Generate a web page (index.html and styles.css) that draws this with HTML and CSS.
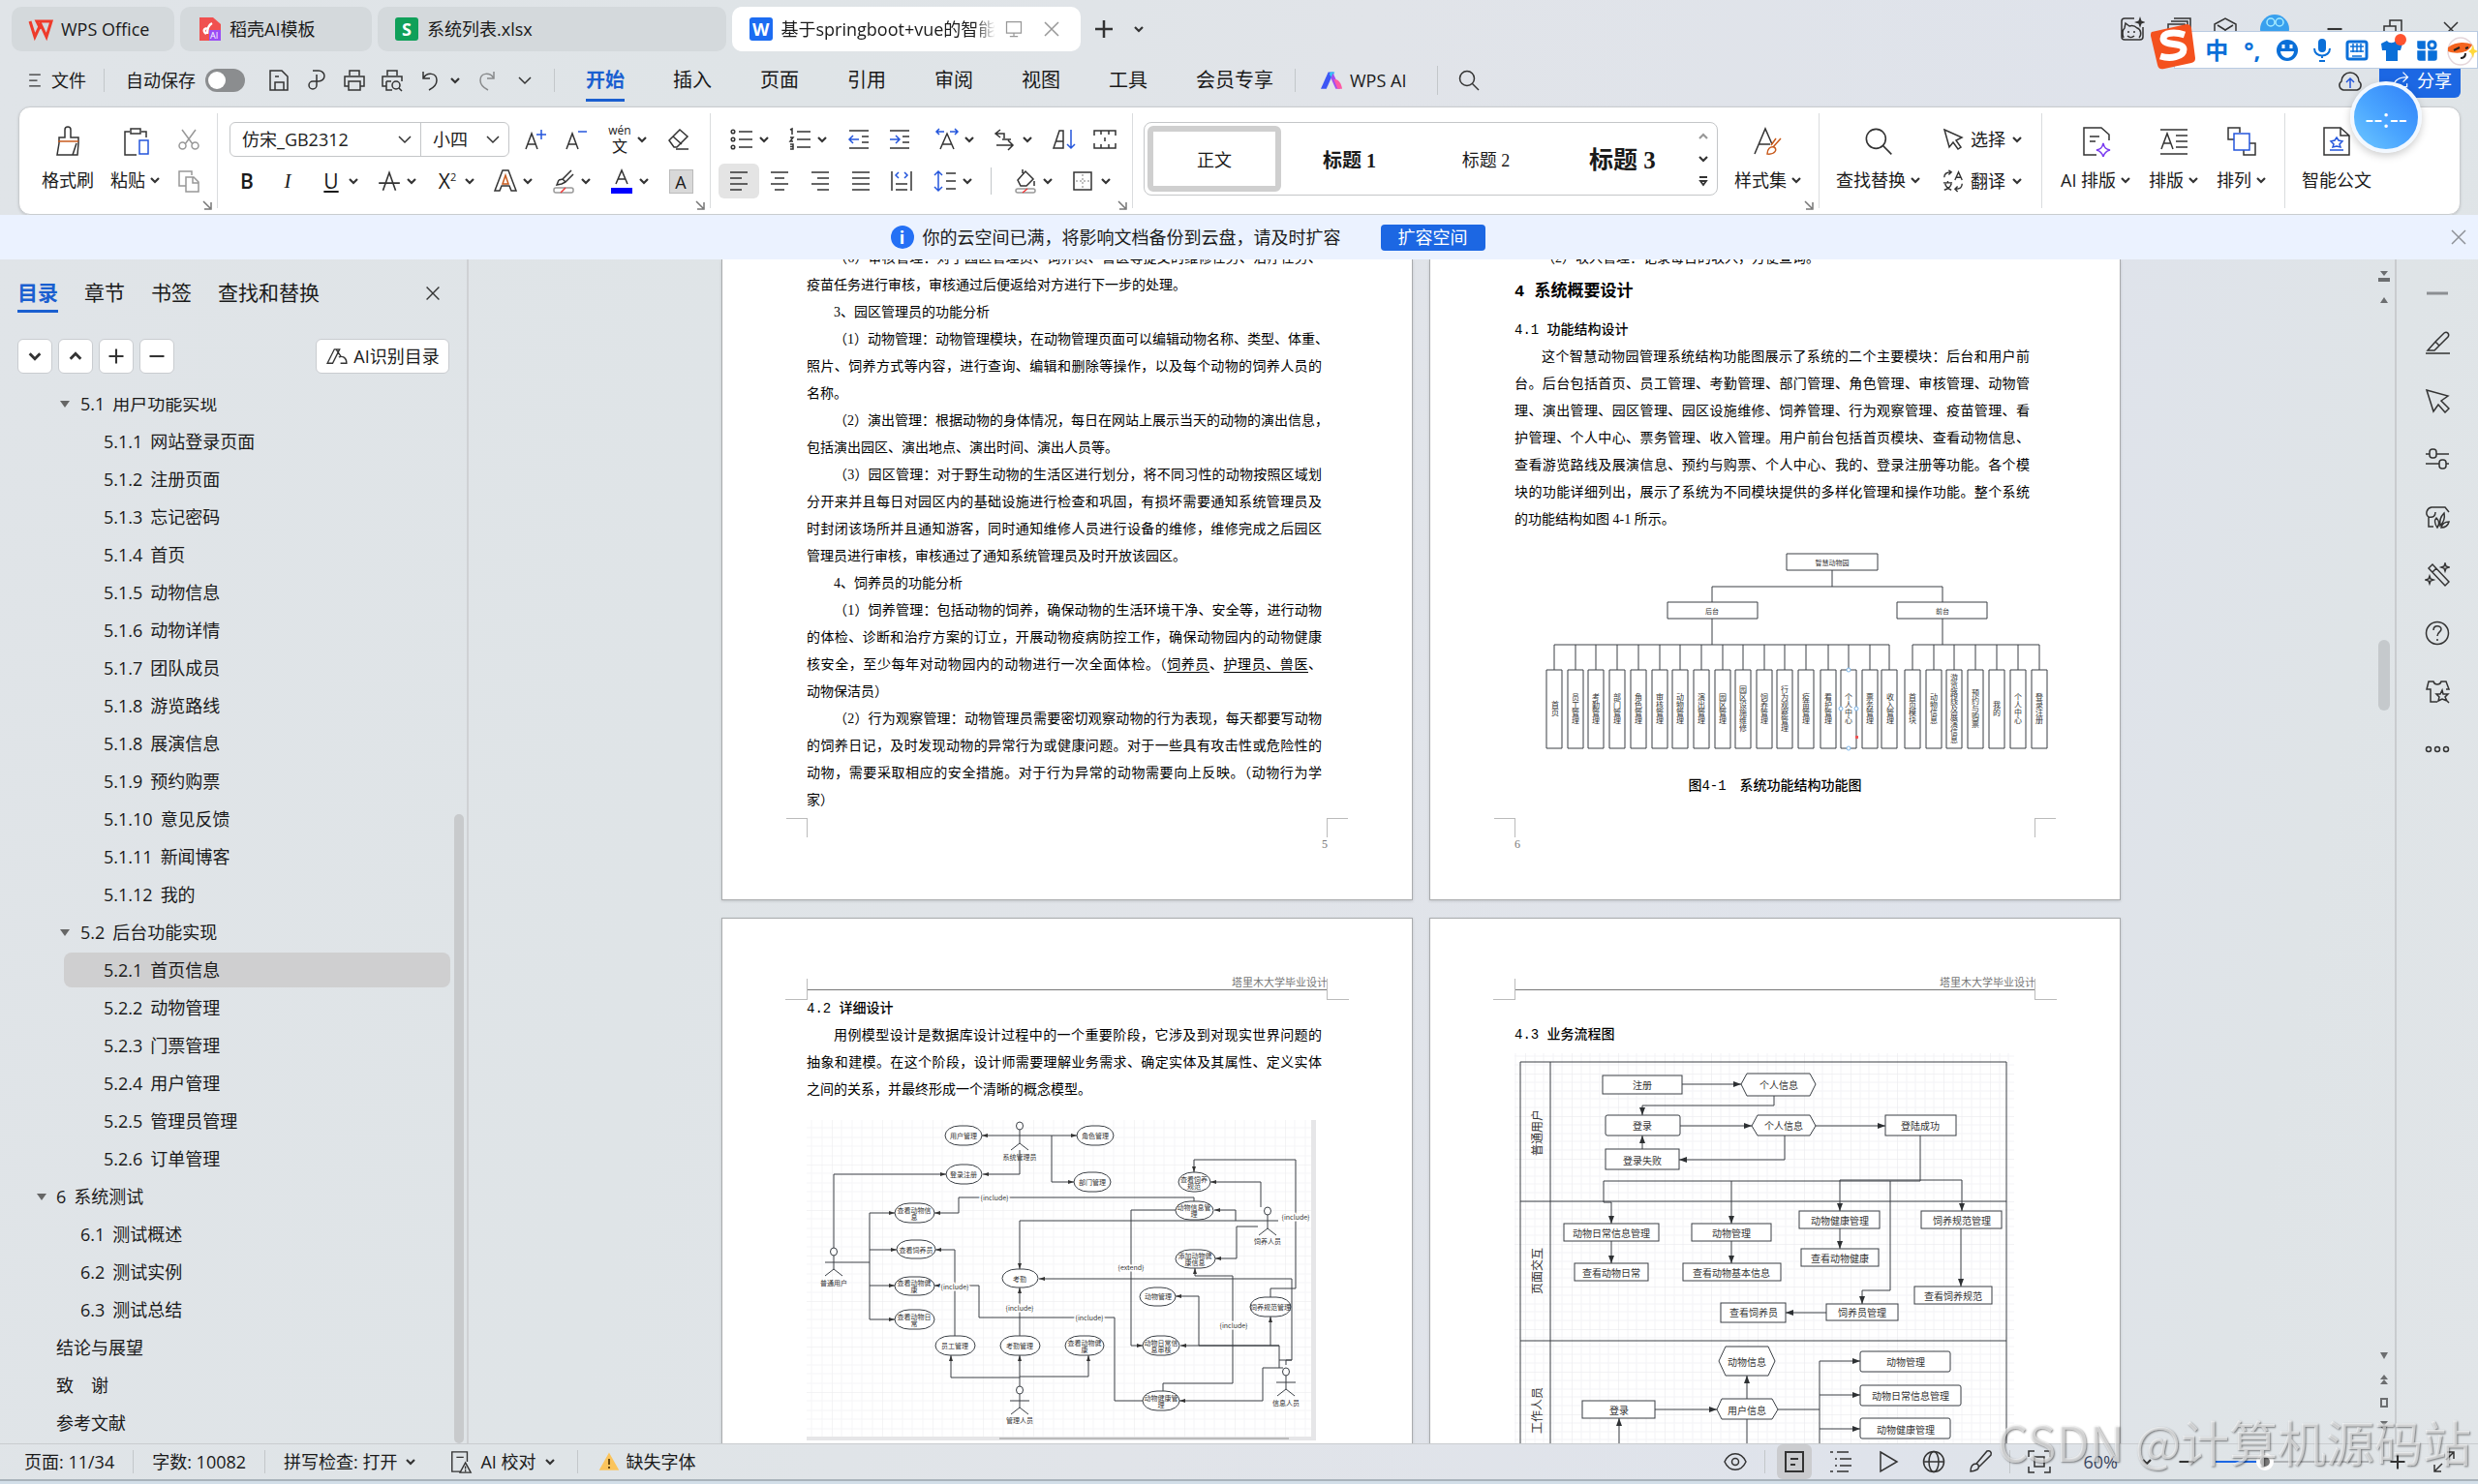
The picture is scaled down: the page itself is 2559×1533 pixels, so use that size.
FILE: index.html
```html
<!DOCTYPE html>
<html lang="zh-CN">
<head>
<meta charset="utf-8">
<title>WPS Office</title>
<link rel="stylesheet" href="styles.css">
</head>
<body>
<svg class="sprite" aria-hidden="true">
  <symbol id="caret" viewBox="0 0 12 12"><path d="M2 4l4 4 4-4" stroke-width="2.2"/></symbol>
  <symbol id="chev" viewBox="0 0 16 16"><path d="M2 5l6 6 6-6"/></symbol>
  <symbol id="x" viewBox="0 0 24 24"><path d="M5 5l14 14M19 5L5 19"/></symbol>
  <symbol id="search" viewBox="0 0 24 24"><circle cx="10" cy="10" r="7.5"/><path d="M15.500 15.500L22 22"/></symbol>
  <symbol id="launch" viewBox="0 0 12 12"><path d="M2 2l7 7M10 3v7H3"/></symbol>
  <symbol id="ham" viewBox="0 0 24 24"><path d="M5 5h14M5 12h10M5 19h14"/></symbol>
  <symbol id="save" viewBox="0 0 24 24"><path d="M3 2h12l6 6v14H3zM8 22v-8h9v8M8 8h4"/></symbol>
  <symbol id="export" viewBox="0 0 24 24"><path d="M8 2h6a6 5.500 0 0 1 0 11H8a4 4 0 1 0 4 4V6"/></symbol>
  <symbol id="print" viewBox="0 0 24 24"><path d="M7 7V2h10v5M6 18H2V8h20v10h-4M6 13h12v9H6z"/></symbol>
  <symbol id="preview" viewBox="0 0 24 24"><path d="M7 7V2h10v5M6 18H2V8h20v5M6 13h5M6 13v9h6"/><circle cx="16" cy="17" r="4"/><path d="M19 20l3 3"/></symbol>
  <symbol id="undo" viewBox="0 0 24 24"><path d="M5 3v7h7M5 10c4-7 14-6 14 2 0 5-4 8-8 10"/></symbol>
  <symbol id="redo" viewBox="0 0 24 24"><path d="M19 3v7h-7M19 10C15 3 5 4 5 12c0 5 4 8 8 10"/></symbol>
  <symbol id="brush" viewBox="0 0 32 32"><path d="M13 12V4a3 3 0 0 1 6 0v8h8v6l-1 12H5l2-12v-6zM25 18l-4 12"/><path class="or" d="M6 16h21"/></symbol>
  <symbol id="paste" viewBox="0 0 32 32"><path d="M10 6H5v24h12M22 6h5v6M11 3h10v5H11z"/><path class="bl" d="M20 15h9v14h-9z"/></symbol>
  <symbol id="cut" viewBox="0 0 24 24"><path d="M5 2l11 15M19 2L8 17"/><circle cx="5.500" cy="18.500" r="3.500"/><circle cx="18.500" cy="18.500" r="3.500"/></symbol>
  <symbol id="copy" viewBox="0 0 24 24"><path d="M9 17H2V2h13v4M9 8h8l5 5v10H9zM16 8v6h6"/></symbol>
  <symbol id="aup" viewBox="0 0 26 24"><path d="M3 22l6-16 6 16M5 17h8"/><path class="bl" d="M19 2v10M14 7h10"/></symbol>
  <symbol id="adn" viewBox="0 0 26 24"><path d="M3 22l6-16 6 16M5 17h8"/><path class="bl" d="M15 4h9"/></symbol>
  <symbol id="eraser" viewBox="0 0 24 24"><path d="M2 13L13 2l8 7-11 11H7zM6 9l9 8M9 22h13"/></symbol>
  <symbol id="strike" viewBox="0 0 24 24"><path d="M6 21l6-17 6 17M2 14h20"/></symbol>
  <symbol id="hl" viewBox="0 0 26 26"><path d="M8 12l4-1 9-9M12 11l3 3 8-8M8 12l-2 5 5-1 4-2"/><rect x="3" y="20" width="20" height="5" rx="2" stroke="#999"/><path d="M10 25l5-5" stroke="#e33"/></symbol>
  <symbol id="fontcol" viewBox="0 0 26 26"><path d="M7 16L13 2l6 14M9 11h8"/><path d="M2 23h22" stroke="#00f" stroke-width="6"/></symbol>
  <symbol id="outl" viewBox="0 0 26 26"><path d="M2 23L10 2h6l8 21h-5l-2-5H9l-2 5z"/><path class="or" d="M10 16l3-9 3 9z"/></symbol>
  <symbol id="bul" viewBox="0 0 26 24"><path d="M10 4h14M10 12h14M10 20h14"/><circle cx="4" cy="4" r="1.800"/><circle cx="4" cy="12" r="1.800"/><circle cx="4" cy="20" r="1.800"/></symbol>
  <symbol id="num" viewBox="0 0 26 24"><path d="M10 4h14M10 12h14M10 20h14M3 2l2-1v6M3 10h3l-3 4h3M3 17h3v5H3M3 19.500h3"/></symbol>
  <symbol id="outd" viewBox="0 0 24 24"><path d="M2 3h20M2 21h20M15 9h7M15 15h7"/><path class="bl" d="M12 12H3M6 8l-4 4 4 4"/></symbol>
  <symbol id="ind" viewBox="0 0 24 24"><path d="M2 3h20M2 21h20M15 9h7M15 15h7"/><path class="bl" d="M2 12h9M8 8l4 4-4 4"/></symbol>
  <symbol id="scale" viewBox="0 0 26 24"><path d="M6 22l7-16 7 16M8 17h10"/><path class="bl" d="M2 4h8M16 4h8M5 1L2 4l3 3M21 1l3 3-3 3"/></symbol>
  <symbol id="dir" viewBox="0 0 24 24"><path d="M8 2L3 6l5 4M3 6h9v5M10 12h9M4 18h17M16 13l5 5-5 5"/></symbol>
  <symbol id="sort" viewBox="0 0 26 24"><path d="M2 21L8 3h4v18zM5 14h7"/><path class="bl" d="M20 2v19M16 17l4 4 4-4"/></symbol>
  <symbol id="tabs" viewBox="0 0 26 24"><path d="M2 8V3h22v5M9 3v4M17 3v4M2 16v5h22v-5M9 21v-4M17 21v-4M13 10v4"/></symbol>
  <symbol id="al" viewBox="0 0 24 24"><path d="M3 3h18M3 9h12M3 15h18M3 21h12"/></symbol>
  <symbol id="ac" viewBox="0 0 24 24"><path d="M3 3h18M7 9h10M3 15h18M7 21h10"/></symbol>
  <symbol id="ar" viewBox="0 0 24 24"><path d="M3 3h18M9 9h12M3 15h18M9 21h12"/></symbol>
  <symbol id="aj" viewBox="0 0 24 24"><path d="M3 3h18M3 9h18M3 15h18M3 21h18"/></symbol>
  <symbol id="ad" viewBox="0 0 24 24"><path d="M2 2v20M22 2v20M6 15h12M6 21h12"/><path class="bl" d="M9 3L6 6l3 3M15 3l3 3-3 3"/></symbol>
  <symbol id="lh" viewBox="0 0 26 24"><path d="M14 4h10M14 12h10M14 20h10"/><path class="bl" d="M6 2v20M2 6l4-4 4 4M2 18l4 4 4-4"/></symbol>
  <symbol id="fill" viewBox="0 0 26 26"><path d="M5 12l8-9 8 8-7 7H8zM10 5V1M22 13v5"/><rect x="3" y="21" width="20" height="4" rx="2" stroke="#999"/><path d="M10 25l5-4" stroke="#e33"/></symbol>
  <symbol id="border" viewBox="0 0 24 24"><path d="M3 3h18v18H3z"/><path d="M12 5v14M5 12h14" stroke="#aaa" stroke-dasharray="2 2"/></symbol>
  <symbol id="styles" viewBox="0 0 32 32"><path d="M2 29L13 3l7 16M6 19h12"/><path class="or" d="M29 13l-8 9M24 13l-5 7M15 29c0-5 3-8 7-7 4 2 1 8-7 7z"/></symbol>
  <symbol id="pick" viewBox="0 0 24 24"><path d="M3 2l18 8-6 3 5 7-3 2-5-7-4 5z"/></symbol>
  <symbol id="trans" viewBox="0 0 26 26"><path d="M3 9c0-4 3-6 8-6M8 1l3 2-3 3M15 12l4-9 4 9M17 9h5M2 15h10M7 13v2M4 16c1 4 4 6 7 7M11 16c-1 4-4 6-8 7M23 16c0 4-3 6-7 6M18 19l-3 3 3 3"/></symbol>
  <symbol id="aidoc" viewBox="0 0 32 32"><path d="M16 30H3V2h18l8 7v6M9 11h10M9 16h6"/><path stroke="#7a3cf0" d="M23 18c1 5 3 6 7 7-4 1-6 3-7 7-1-4-3-6-7-7 4-1 6-2 7-7z"/></symbol>
  <symbol id="typeset" viewBox="0 0 32 32"><path d="M2 4h28M2 29h28M3 24L9 8l6 16M5 18h8M18 10h12M18 16h12M18 22h12"/></symbol>
  <symbol id="arrange" viewBox="0 0 32 32"><path d="M8 14H2V2h12v5M24 18h6v12H18v-5"/><path class="bl" d="M8 8h16v17H8z"/></symbol>
  <symbol id="gov" viewBox="0 0 32 32"><path d="M3 2h17l9 8v20H3zM20 2v8h9"/><path class="bl" d="M16 12l2 3 4 1-3 3 1 3-4-1-4 1 1-3-3-3 4-1zM9 25h14"/></symbol>
  <symbol id="plus" viewBox="0 0 24 24"><path d="M12 3v18M3 12h18" stroke-width="2.500"/></symbol>
  <symbol id="minus" viewBox="0 0 24 24"><path d="M3 12h18" stroke-width="2.500"/></symbol>
  <symbol id="monitor" viewBox="0 0 24 24"><path d="M3 3h18v14H3zM12 17v4M7 21h10"/></symbol>
  <symbol id="bear" viewBox="0 0 26 26"><path d="M15 2H5a3 3 0 0 0-3 3v16a3 3 0 0 0 3 3h16a3 3 0 0 0 3-3V11M4 22c-2-5-1-8 1-10l1-5 4 3c3-1 6 0 8 2 4 1 5 7 2 10M9 15v2M15 15v2M8 20c2 2 5 2 7 0"/><path fill="#333" stroke="none" d="M21 0l1.500 4.500L27 6l-4.500 1.500L21 12l-1.500-4.500L15 6l4.500-1.500z"/></symbol>
  <symbol id="stack" viewBox="0 0 26 26"><path d="M2 8h17v17H2zM5 5h17v17M8 2h17v17M6 13h9"/></symbol>
  <symbol id="cube" viewBox="0 0 26 26"><path d="M2 8l11-6 11 6v12l-11 5L2 20zM5 9l8 5 8-5M13 14v9"/></symbol>
  <symbol id="restore" viewBox="0 0 24 24"><path d="M3 9h12v12H3zM9 9V3h12v12h-6"/></symbol>
  <symbol id="cloud" viewBox="0 0 26 26"><path d="M6 23a5 5 0 0 1-2-9 9 9 0 0 1 18 0 5 5 0 0 1-2 9z"/><path class="bl" d="M13 21v-9M9 15l4-4 4 4"/></symbol>
  <symbol id="share" viewBox="0 0 24 24"><path d="M15 2l6 6-6 6M21 8C10 8 4 12 3 20h17v-4"/></symbol>
  <symbol id="ai" viewBox="0 0 26 20"><path d="M2 18L10 2h6L8 18zM12 2l6 9M17 18h7c0-6-4-9-9-7"/></symbol>
  <symbol id="pen" viewBox="0 0 26 26"><path d="M1 24h25M3 21l8-9L20 3c3-2 6 1 4 4l-9 9-5 5zM11 12l4 4"/></symbol>
  <symbol id="arrow" viewBox="0 0 26 26"><path d="M2 2l22 6-7 5 8 8-4 4-7-8-5 7z"/></symbol>
  <symbol id="sliders" viewBox="0 0 26 26"><path d="M1 8h4M12 8h13M1 18h14M22 18h3"/><rect x="5" y="3" width="7" height="9" rx="3"/><rect x="15" y="14" width="7" height="9" rx="3"/></symbol>
  <symbol id="leaf" viewBox="0 0 26 26"><path d="M9 23H4V13C0 10 2 4 7 3h14l4 5M4 13c5 1 7-1 7-5M13 24c-3-4-3-8-1-10 3 3 3 7 1 10zM16 22c-1-5 1-10 4-13 1 5 0 9-4 13zM17 24c1-4 4-6 8-6-1 4-4 6-8 6z"/></symbol>
  <symbol id="wand" viewBox="0 0 26 26"><path d="M4 6l4-4 17 18-4 4zM8 10l4-4M21 1l1 3 3 1-3 1-1 3-1-3-3-1 3-1zM5 14l1 3 3 1-3 1-1 3-1-3-3-1 3-1z"/></symbol>
  <symbol id="help" viewBox="0 0 26 26"><circle cx="13" cy="13" r="11.500"/><path d="M9 10c0-6 8-5 8-1 0 3-4 3-4 7M13 19v2"/></symbol>
  <symbol id="shirt" viewBox="0 0 26 26"><path d="M13 24H6V11H2l2-8h5c1 4 7 4 8 0h5l3 8h-3"/><path d="M18 12l1 4h5l-3 3 2 4-5-2-4 2 1-4-3-3h4zM21 21l4 4"/></symbol>
  <symbol id="dots" viewBox="0 0 26 26"><circle cx="4" cy="13" r="2.500"/><circle cx="13" cy="13" r="2.500"/><circle cx="22" cy="13" r="2.500"/></symbol>
  <symbol id="proof" viewBox="0 0 24 26"><path d="M11 24H2V2h17v11M7 8h8M17 14l6 11H11zM17 18v3M17 22v2"/></symbol>
  <symbol id="eye" viewBox="0 0 26 26"><path d="M2 13c5-11 17-11 22 0-5 11-17 11-22 0z"/><circle cx="13" cy="13" r="3.500"/></symbol>
  <symbol id="page" viewBox="0 0 26 26"><path d="M4 3h18v20H4zM9 10h8M9 16h5" stroke-width="2"/></symbol>
  <symbol id="list" viewBox="0 0 26 26"><path d="M2 3h3M9 3h12M7 10h2M12 10h12M7 17h2M12 17h12M2 23h3M9 23h12"/></symbol>
  <symbol id="play" viewBox="0 0 26 26"><path d="M6 3l17 10L6 23z"/></symbol>
  <symbol id="globe" viewBox="0 0 26 26"><circle cx="13" cy="13" r="10.500"/><ellipse cx="13" cy="13" rx="5" ry="10.500"/><path d="M3 13h20"/></symbol>
  <symbol id="quill" viewBox="0 0 26 26"><path d="M3 23c0-5 2-8 6-8 3 1 3 4 1 6-2 1-4 2-7 2zM9 15L20 2c3-1 5 1 4 4L12 18"/></symbol>
  <symbol id="focus" viewBox="0 0 26 26"><path d="M2 8V2h6M18 2h6v6M24 18v6h-6M8 24H2v-6M8 8h10v10H8z"/></symbol>
  <symbol id="full" viewBox="0 0 26 26"><path d="M16 3h7v7M23 3l-8 8M3 16v7h7M3 23l8-8"/></symbol>
  <marker id="m" viewBox="0 0 8 6" refX="8" refY="3" markerWidth="8" markerHeight="6" markerUnits="userSpaceOnUse" orient="auto-start-reverse"><path d="M0 0l8 3-8 3z" fill="#2d3033" stroke="none"/></marker>
  <marker id="s" viewBox="0 0 6 4" refX="6" refY="2" markerWidth="6" markerHeight="4" markerUnits="userSpaceOnUse" orient="auto-start-reverse"><path d="M0 0l6 2-6 2z" fill="#333" stroke="none"/></marker>
</svg>

<header class="titlebar">
  <button class="tab tab-home"><svg class="i24" viewBox="0 0 24 24"><path d="M1 4l5 16L12 7l6 13L23 4H8l4 8" stroke="#ee3b2b" stroke-width="3"/></svg>WPS Office</button>
  <button class="tab tab-tpl"><svg class="i24" viewBox="0 0 24 24"><path d="M2 0h14l8 7v17H2z" fill="#f0504f" stroke="none"/><path d="M9 17C5 14 7 10 11 12M10 17c0-6 1-9 5-11" stroke="#fff" stroke-width="2.500"/><rect x="12" y="13" width="12" height="11" fill="#9a4df5" stroke="none"/><text x="13" y="22" font-size="9" fill="#fff" stroke="none">AI</text></svg>稻壳AI模板</button>
  <button class="tab tab-doc"><span class="app green">S</span>系统列表.xlsx</button>
  <button class="tab tab-doc active"><span class="app blue">W</span><span class="fade">基于springboot+vue的智能</span><svg class="i20 dim"><use href="#monitor"/></svg><svg class="i24 dim"><use href="#x"/></svg></button>
  <button class="flat" aria-label="新建"><svg class="i24"><use href="#plus"/></svg></button>
  <button class="flat" aria-label="标签列表"><svg class="i12"><use href="#caret"/></svg></button>
  <div class="winctl">
    <svg class="i26"><use href="#bear"/></svg><svg class="i26"><use href="#stack"/></svg><svg class="i26"><use href="#cube"/></svg>
    <svg class="avatar" viewBox="0 0 32 32"><circle cx="16" cy="16" r="15" fill="#39a0ee" stroke="none"/><circle cx="12" cy="9" r="4" stroke="#a6ecff"/><circle cx="21" cy="9" r="4" stroke="#a6ecff"/></svg>
    <svg class="i20"><use href="#minus"/></svg><svg class="i24"><use href="#restore"/></svg><svg class="i24"><use href="#x"/></svg>
  </div>
</header>

<nav class="menubar">
  <button class="file"><svg class="i20"><use href="#ham"/></svg>文件</button>
  <i class="vsep"></i>
  <label class="auto">自动保存<input type="checkbox" class="toggle"></label>
  <div class="quick">
    <svg class="i24"><use href="#save"/></svg><svg class="i24"><use href="#export"/></svg><svg class="i24"><use href="#print"/></svg><svg class="i24"><use href="#preview"/></svg>
    <span class="pair"><svg class="i24"><use href="#undo"/></svg><svg class="i12"><use href="#caret"/></svg></span>
    <svg class="i24 dim"><use href="#redo"/></svg><svg class="i16"><use href="#chev"/></svg>
  </div>
  <i class="vsep"></i>
  <div class="tabs"><a href="#" class="on">开始</a><a href="#">插入</a><a href="#">页面</a><a href="#">引用</a><a href="#">审阅</a><a href="#">视图</a><a href="#">工具</a><a href="#">会员专享</a></div>
  <i class="vsep"></i>
  <button class="wpsai"><svg viewBox="0 0 24 20"><path d="M0 19L8 1h6L6 19z" fill="#3d56f5" stroke="none"/><path d="M9 3l2-2h4l-3 7z" fill="#35c5f5" stroke="none"/><path d="M13 2l8 17h-5L11 8z" fill="#a04df0" stroke="none"/><path d="M14 9c5-1 8 4 9 10h-5z" fill="#ff5aa5" stroke="none"/></svg>WPS AI</button>
  <i class="vsep tall"></i>
  <svg class="i24"><use href="#search"/></svg>
  <div class="right"><svg class="i26"><use href="#cloud"/></svg><button class="share"><svg class="i20"><use href="#share"/></svg>分享</button></div>
</nav>

<section class="ribbon">
  <div class="grp clip">
    <button class="big"><svg class="i32"><use href="#brush"/></svg><span>格式刷</span></button>
    <button class="big"><svg class="i32"><use href="#paste"/></svg><span>粘贴<svg class="i12"><use href="#caret"/></svg></span></button>
    <div class="stackcol dim"><svg class="i24"><use href="#cut"/></svg><svg class="i24"><use href="#copy"/></svg></div>
    <svg class="launch"><use href="#launch"/></svg>
  </div>
  <div class="grp font">
    <div class="rows">
      <div class="row">
        <div class="combo"><span class="sel name"><select aria-label="字体"><option>仿宋_GB2312</option></select><svg class="i16"><use href="#chev"/></svg></span><span class="sel size"><select aria-label="字号"><option>小四</option></select><svg class="i16"><use href="#chev"/></svg></span></div>
        <button class="t"><svg class="i26"><use href="#aup"/></svg></button><button class="t"><svg class="i26"><use href="#adn"/></svg></button>
        <button class="tc"><span class="wen"><small>wén</small>文</span><svg class="i12"><use href="#caret"/></svg></button>
        <button class="t wide"><svg class="i24"><use href="#eraser"/></svg></button>
      </div>
      <div class="row in">
        <button class="t"><b>B</b></button><button class="t"><em>I</em></button>
        <button class="tc"><u>U</u><svg class="i12"><use href="#caret"/></svg></button>
        <button class="tc"><svg class="i26"><use href="#strike"/></svg><svg class="i12"><use href="#caret"/></svg></button>
        <button class="tc"><span class="g">X<sup>2</sup></span><svg class="i12"><use href="#caret"/></svg></button>
        <button class="tc"><svg class="i26"><use href="#outl"/></svg><svg class="i12"><use href="#caret"/></svg></button>
        <button class="tc"><svg class="i26"><use href="#hl"/></svg><svg class="i12"><use href="#caret"/></svg></button>
        <button class="tc"><svg class="i26"><use href="#fontcol"/></svg><svg class="i12"><use href="#caret"/></svg></button>
        <button class="t wide"><span class="shade">A</span></button>
      </div>
    </div>
    <svg class="launch"><use href="#launch"/></svg>
  </div>
  <div class="grp para">
    <div class="rows">
      <div class="row gap">
        <span><button class="tc"><svg class="i26"><use href="#bul"/></svg><svg class="i12"><use href="#caret"/></svg></button><button class="tc"><svg class="i26"><use href="#num"/></svg><svg class="i12"><use href="#caret"/></svg></button></span>
        <span><button class="t"><svg class="i24"><use href="#outd"/></svg></button><button class="t"><svg class="i24"><use href="#ind"/></svg></button></span>
        <span><button class="tc"><svg class="i26"><use href="#scale"/></svg><svg class="i12"><use href="#caret"/></svg></button><button class="tc"><svg class="i24"><use href="#dir"/></svg><svg class="i12"><use href="#caret"/></svg></button></span>
        <span><button class="t"><svg class="i26"><use href="#sort"/></svg></button><button class="t"><svg class="i26"><use href="#tabs"/></svg></button></span>
      </div>
      <div class="row">
        <button class="t pressed"><svg class="i24"><use href="#al"/></svg></button><button class="t"><svg class="i24"><use href="#ac"/></svg></button><button class="t"><svg class="i24"><use href="#ar"/></svg></button><button class="t"><svg class="i24"><use href="#aj"/></svg></button><button class="t"><svg class="i24"><use href="#ad"/></svg></button>
        <button class="tc"><svg class="i26"><use href="#lh"/></svg><svg class="i12"><use href="#caret"/></svg></button>
        <i class="vsep mid"></i>
        <button class="tc"><svg class="i26"><use href="#fill"/></svg><svg class="i12"><use href="#caret"/></svg></button>
        <button class="tc"><svg class="i24"><use href="#border"/></svg><svg class="i12"><use href="#caret"/></svg></button>
      </div>
    </div>
    <svg class="launch"><use href="#launch"/></svg>
  </div>
  <div class="grp style">
    <div class="gallery">
      <button class="cur">正文</button><button class="h1">标题 1</button><button>标题 2</button><button class="h3">标题 3</button>
      <div class="spin"><svg class="i12 dim up"><use href="#caret"/></svg><svg class="i12"><use href="#caret"/></svg><svg class="i12" viewBox="0 0 12 12"><path d="M2 2h8M3 6l3 4 3-4z" stroke-width="1.800"/></svg></div>
    </div>
    <button class="big"><svg class="i32"><use href="#styles"/></svg><span>样式集<svg class="i12"><use href="#caret"/></svg></span></button>
    <svg class="launch"><use href="#launch"/></svg>
  </div>
  <div class="grp find">
    <button class="big"><svg class="i32 thin"><use href="#search"/></svg><span>查找替换<svg class="i12"><use href="#caret"/></svg></span></button>
    <div class="rows">
      <button class="row lab"><svg class="i24"><use href="#pick"/></svg>选择<svg class="i12"><use href="#caret"/></svg></button>
      <button class="row lab"><svg class="i24"><use href="#trans"/></svg>翻译<svg class="i12"><use href="#caret"/></svg></button>
    </div>
  </div>
  <div class="grp lay">
    <button class="big"><svg class="i32"><use href="#aidoc"/></svg><span>AI 排版<svg class="i12"><use href="#caret"/></svg></span></button>
    <button class="big"><svg class="i32"><use href="#typeset"/></svg><span>排版<svg class="i12"><use href="#caret"/></svg></span></button>
    <button class="big"><svg class="i32"><use href="#arrange"/></svg><span>排列<svg class="i12"><use href="#caret"/></svg></span></button>
  </div>
  <div class="grp last">
    <button class="big"><svg class="i32"><use href="#gov"/></svg><span>智能公文</span></button>
  </div>
</section>

<div class="notice">
  <div class="msg"><span class="info">i</span>你的云空间已满，将影响文档备份到云盘，请及时扩容<button>扩容空间</button></div>
  <svg class="i24 dim"><use href="#x"/></svg>
</div>

<div class="work">
  <aside class="side">
    <div class="sidetabs"><a href="#" class="on">目录</a><a href="#">章节</a><a href="#">书签</a><a href="#">查找和替换</a><svg class="i22"><use href="#x"/></svg></div>
    <div class="sidebtns"><button aria-label="展开"><svg class="w16"><use href="#caret"/></svg></button><button aria-label="收起"><svg class="w16 up"><use href="#caret"/></svg></button><button aria-label="增加"><svg class="i20"><use href="#plus"/></svg></button><button aria-label="减少"><svg class="i20"><use href="#minus"/></svg></button><button class="aibtn"><svg viewBox="0 0 26 20"><use href="#ai"/></svg>AI识别目录</button></div>
    <div class="tocwrap">
      <ul class="toc">
        <li class="l2 open"><span>5.1</span>用户功能实现</li>
        <li class="l3"><span>5.1.1</span>网站登录页面</li>
        <li class="l3"><span>5.1.2</span>注册页面</li>
        <li class="l3"><span>5.1.3</span>忘记密码</li>
        <li class="l3"><span>5.1.4</span>首页</li>
        <li class="l3"><span>5.1.5</span>动物信息</li>
        <li class="l3"><span>5.1.6</span>动物详情</li>
        <li class="l3"><span>5.1.7</span>团队成员</li>
        <li class="l3"><span>5.1.8</span>游览路线</li>
        <li class="l3"><span>5.1.8</span>展演信息</li>
        <li class="l3"><span>5.1.9</span>预约购票</li>
        <li class="l3"><span>5.1.10</span>意见反馈</li>
        <li class="l3"><span>5.1.11</span>新闻博客</li>
        <li class="l3"><span>5.1.12</span>我的</li>
        <li class="l2 open"><span>5.2</span>后台功能实现</li>
        <li class="l3 sel"><span>5.2.1</span>首页信息</li>
        <li class="l3"><span>5.2.2</span>动物管理</li>
        <li class="l3"><span>5.2.3</span>门票管理</li>
        <li class="l3"><span>5.2.4</span>用户管理</li>
        <li class="l3"><span>5.2.5</span>管理员管理</li>
        <li class="l3"><span>5.2.6</span>订单管理</li>
        <li class="l1 open"><span>6</span>系统测试</li>
        <li class="l2"><span>6.1</span>测试概述</li>
        <li class="l2"><span>6.2</span>测试实例</li>
        <li class="l2"><span>6.3</span>测试总结</li>
        <li class="l1">结论与展望</li>
        <li class="l1">致　谢</li>
        <li class="l1">参考文献</li>
      </ul>
      <div class="sidebar-thumb"></div>
    </div>
  </aside>

  <main class="canvas">
    <article class="page top">
      <div class="body">
        <p><span class="ind">（6）审核管理：对于园区管理员、饲养员、兽医等提交的维修任务、治疗任务、</span><span class="end">疫苗任务进行审核，审核通过后便返给对方进行下一步的处理。</span></p>
        <p><span class="ind end">3、园区管理员的功能分析</span></p>
        <p><span class="ind">（1）动物管理：动物管理模块，在动物管理页面可以编辑动物名称、类型、体重、</span><span>照片、饲养方式等内容，进行查询、编辑和删除等操作，以及每个动物的饲养人员的</span><span class="end">名称。</span></p>
        <p><span class="ind">（2）演出管理：根据动物的身体情况，每日在网站上展示当天的动物的演出信息，</span><span class="end">包括演出园区、演出地点、演出时间、演出人员等。</span></p>
        <p><span class="ind">（3）园区管理：对于野生动物的生活区进行划分，将不同习性的动物按照区域划</span><span>分开来并且每日对园区内的基础设施进行检查和巩固，有损坏需要通知系统管理员及</span><span>时封闭该场所并且通知游客，同时通知维修人员进行设备的维修，维修完成之后园区</span><span class="end">管理员进行审核，审核通过了通知系统管理员及时开放该园区。</span></p>
        <p><span class="ind end">4、饲养员的功能分析</span></p>
        <p><span class="ind">（1）饲养管理：包括动物的饲养，确保动物的生活环境干净、安全等，进行动物</span><span>的体检、诊断和治疗方案的订立，开展动物疫病防控工作，确保动物园内的动物健康</span><span>核安全，至少每年对动物园内的动物进行一次全面体检。（<u>饲养员</u>、<u>护理员、兽医</u>、</span><span class="end">动物保洁员）</span></p>
        <p><span class="ind">（2）行为观察管理：动物管理员需要密切观察动物的行为表现，每天都要写动物</span><span>的饲养日记，及时发现动物的异常行为或健康问题。对于一些具有攻击性或危险性的</span><span>动物，需要采取相应的安全措施。对于行为异常的动物需要向上反映。（动物行为学</span><span class="end">家）</span></p>
      </div>
      <footer><div class="marks"><i></i><i></i></div><div class="no r">5</div></footer>
    </article>

    <article class="page top">
      <div class="body">
        <p><span class="ind end">（2）收入管理：记录每日的收入，方便查询。</span></p>
        <h1>4 系统概要设计</h1>
        <h2>4.1 功能结构设计</h2>
        <p><span class="ind">这个智慧动物园管理系统结构功能图展示了系统的二个主要模块：后台和用户前</span><span>台。后台包括首页、员工管理、考勤管理、部门管理、角色管理、审核管理、动物管</span><span>理、演出管理、园区管理、园区设施维修、饲养管理、行为观察管理、疫苗管理、看</span><span>护管理、个人中心、票务管理、收入管理。用户前台包括首页模块、查看动物信息、</span><span>查看游览路线及展演信息、预约与购票、个人中心、我的、登录注册等功能。各个模</span><span>块的功能详细列出，展示了系统为不同模块提供的多样化管理和操作功能。整个系统</span><span class="end">的功能结构如图 4-1 所示。</span></p>
        <svg class="dia tree" viewBox="0 0 552 220" width="552" height="220">
          <path d="M281 8h94v17h-94zM158 58h93v17h-93zM395 58h93v17h-93zM328 25v17M204 58V42h238v16M204 75v27M442 75v27M41 128v-26h346v26M63 102v26M84 102v26M106 102v26M128 102v26M150 102v26M171 102v26M193 102v26M215 102v26M236 102v26M258 102v26M279 102v26M301 102v26M324 102v26M345 102v26M367 102v26M411 128v-26h131v26M433 102v26M454 102v26M476 102v26M498 102v26M520 102v26"/>
          <path d="M33 128h16v81H33zM55 128h16v81H55zM76 128h16v81H76zM98 128h16v81H98zM120 128h16v81h-16zM142 128h16v81h-16zM163 128h16v81h-16zM185 128h16v81h-16zM207 128h16v81h-16zM228 128h16v81h-16zM250 128h16v81h-16zM271 128h16v81h-16zM293 128h16v81h-16zM316 128h16v81h-16zM337 128h16v81h-16zM359 128h16v81h-16zM379 128h16v81h-16zM403 128h16v81h-16zM425 128h16v81h-16zM446 128h16v81h-16zM468 128h16v81h-16zM490 128h16v81h-16zM512 128h16v81h-16zM534 128h16v81h-16z"/>
          <g><text x="328" y="17">智慧动物园</text><text x="204" y="67">后台</text><text x="442" y="67">前台</text></g>
          <g class="vert"><text x="42" y="168">首页</text><text x="63" y="168">员工管理</text><text x="84" y="168">考勤管理</text><text x="106" y="168">部门管理</text><text x="128" y="168">角色管理</text><text x="150" y="168">审核管理</text><text x="171" y="168">动物管理</text><text x="193" y="168">演出管理</text><text x="215" y="168">园区管理</text><text x="236" y="168">园区设施维修</text><text x="258" y="168">饲养管理</text><text x="279" y="168">行为观察管理</text><text x="301" y="168">疫苗管理</text><text x="324" y="168">看护管理</text><text x="345" y="168">个人中心</text><text x="367" y="168">票务管理</text><text x="388" y="168">收入管理</text><text x="411" y="168">首页模块</text><text x="433" y="168">动物信息</text><text x="454" y="168">游览路线及展演信息</text><text x="476" y="168">预约与购票</text><text x="498" y="168">我的</text><text x="520" y="168">个人中心</text><text x="542" y="168">登录注册</text></g>
          <g fill="#fff" stroke="#7fb8ea"><circle cx="345" cy="128" r="2"/><circle cx="345" cy="209" r="2"/><circle cx="337" cy="168" r="2"/><circle cx="353" cy="168" r="2"/></g><rect x="352" y="196" width="3" height="3" fill="#e55" stroke="none"/>
        </svg>
        <p class="cap">图4-1　系统功能结构功能图</p>
      </div>
      <footer><div class="marks"><i></i><i></i></div><div class="no">6</div></footer>
    </article>

    <article class="page">
      <header>塔里木大学毕业设计</header>
      <div class="body">
        <h2>4.2 详细设计</h2>
        <p><span class="ind">用例模型设计是数据库设计过程中的一个重要阶段，它涉及到对现实世界问题的</span><span>抽象和建模。在这个阶段，设计师需要理解业务需求、确定实体及其属性、定义实体</span><span class="end">之间的关系，并最终形成一个清晰的概念模型。</span></p>
        <svg class="dia use" viewBox="0 0 526 331" width="526" height="331">
          <defs><pattern id="g1" width="52" height="47" patternUnits="userSpaceOnUse" x="26" y="46"><path d="M10 0v47M21 0v47M31 0v47M42 0v47M0 9h52M0 19h52M0 28h52M0 38h52" stroke="#f5f5f7"/><path d="M0 0v47M0 0h52" stroke="#e9e9ec"/></pattern></defs>
          <rect width="526" height="331" fill="url(#g1)" stroke="none"/><path d="M521 0h5v331H0v-4h521z" fill="#e6e6e8" stroke="none"/><path d="M199 329h299" stroke="#bbb" stroke-width="2"/>
          <g class="edge"><path marker-start="url(#s)" marker-end="url(#s)" d="M181 16h98"/><path marker-end="url(#s)" d="M253 16v48h23"/><path marker-end="url(#s)" d="M220 31v25h-38"/><path marker-end="url(#s)" d="M28 133V56h116"/><path d="M19 147h46"/><path marker-end="url(#s)" d="M65 147V96h26"/><path marker-end="url(#s)" d="M65 134h28"/><path marker-end="url(#s)" d="M65 171h26"/><path marker-end="url(#s)" d="M65 147v59h26"/><path marker-end="url(#s)" d="M400 84v-4H157v16h-25"/><path marker-end="url(#s)" d="M479 183v-9h26V41H400v13"/><path marker-end="url(#s)" d="M469 90V64h-52"/><path marker-end="url(#s)" d="M487 104H220v50"/><path marker-end="url(#s)" d="M443 104V93h-22"/><path marker-end="url(#s)" d="M466 110h-22v33h-22"/><path marker-end="url(#s)" d="M381 93h-46v140h12"/><path marker-end="url(#s)" d="M495 253v-5h6v-84H240"/><path d="M488 248h13"/><path marker-end="url(#s)" d="M368 280v-8h72V161h-39v-8"/><path marker-end="url(#s)" d="M488 256v-23h-83v-51h-24"/><path marker-end="url(#s)" d="M488 233H386"/><path marker-end="url(#s)" d="M479 233v-30"/><path marker-end="url(#s)" d="M492 256h-21v34h-86"/><path marker-end="url(#s)" d="M347 290h-29v-86H178v-33h-46"/><path marker-end="url(#s)" d="M153 223v-89h-20"/><path marker-end="url(#s)" d="M220 223v-50"/><path marker-end="url(#s)" d="M220 275v-32"/><path marker-end="url(#s)" d="M220 266h-71v-23"/><path marker-end="url(#s)" d="M220 265h71v-22"/></g>
          <g class="node"><rect x="143" y="6" width="38" height="20" rx="15"/><rect x="279" y="6" width="38" height="20" rx="15"/><rect x="144" y="46" width="37" height="20" rx="15"/><rect x="276" y="54" width="38" height="20" rx="15"/><rect x="384" y="54" width="33" height="20" rx="15"/><rect x="91" y="86" width="41" height="20" rx="15"/><rect x="381" y="84" width="39" height="19" rx="15"/><rect x="93" y="124" width="40" height="19" rx="15"/><rect x="381" y="134" width="41" height="19" rx="15"/><rect x="202" y="154" width="37" height="19" rx="15"/><rect x="91" y="162" width="41" height="19" rx="15"/><rect x="344" y="173" width="37" height="19" rx="15"/><rect x="458" y="183" width="42" height="20" rx="15"/><rect x="91" y="196" width="41" height="20" rx="15"/><rect x="133" y="223" width="41" height="20" rx="15"/><rect x="200" y="223" width="41" height="20" rx="15"/><rect x="267" y="223" width="40" height="20" rx="15"/><rect x="347" y="223" width="38" height="20" rx="15"/><rect x="347" y="280" width="38" height="20" rx="15"/></g>
          <g class="node"><ellipse cx="220" cy="6" rx="3.500" ry="4"/><ellipse cx="476" cy="94" rx="3.500" ry="4"/><ellipse cx="28" cy="136" rx="3.500" ry="4"/><ellipse cx="220" cy="279" rx="3.500" ry="4"/><ellipse cx="495" cy="260" rx="3.500" ry="4"/></g>
          <path d="M220 10v14M211 31l9-7 9 7M476 98v14M467 119l9-7 9 7M28 140v14M19 161l9-7 9 7M220 283v14M211 304l9-7 9 7M210 290h20M495 264v14M486 285l9-7 9 7M485 271h20"/>
          <g><text x="162" y="16">用户管理</text><text x="298" y="16">角色管理</text><text x="162" y="56">登录注册</text><text x="295" y="64">部门管理</text><text x="400" y="61">查看饲养</text><text x="400" y="68">规范</text><text x="111" y="93">查看动物信</text><text x="111" y="100">息</text><text x="400" y="90">动物信息管</text><text x="400" y="97">理</text><text x="113" y="134">查看饲养员</text><text x="401" y="140">添加动物健</text><text x="401" y="147">康信息</text><text x="220" y="164">考勤</text><text x="111" y="168">查看动物健</text><text x="111" y="175">康</text><text x="363" y="182">动物管理</text><text x="479" y="193">饲养规范管理</text><text x="111" y="203">查看动物日</text><text x="111" y="210">常</text><text x="153" y="233">员工管理</text><text x="220" y="233">考勤管理</text><text x="287" y="230">查看动物健</text><text x="287" y="237">康</text><text x="366" y="230">动物日常信</text><text x="366" y="237">息审核</text><text x="366" y="287">动物健康管</text><text x="366" y="294">理</text><text x="220" y="38">系统管理员</text><text x="476" y="125">饲养人员</text><text x="28" y="168">普通用户</text><text x="220" y="310">管理人员</text><text x="495" y="292">信息人员</text></g>
          <g class="tag"><text x="194" y="80">{include}</text><text x="505" y="100">{include}</text><text x="335" y="152">{extend}</text><text x="153" y="172">{include}</text><text x="220" y="194">{include}</text><text x="292" y="204">{include}</text><text x="441" y="212">{include}</text></g>
        </svg>
      </div>
    </article>

    <article class="page">
      <header>塔里木大学毕业设计</header>
      <div class="body flow">
        <h2>4.3 业务流程图</h2>
        <svg class="dia flowsvg" viewBox="0 0 516 430" width="516" height="430">
          <defs><pattern id="g2" width="48" height="44" patternUnits="userSpaceOnUse" x="11" y="21"><path d="M10 0v44M19 0v44M29 0v44M38 0v44M0 9h48M0 18h48M0 26h48M0 35h48" stroke="#f3f3f6"/><path d="M0 0v44M0 0h48" stroke="#e6e6ea"/></pattern></defs>
          <rect width="516" height="430" fill="url(#g2)" stroke="none"/>
          <path d="M6 430V9h502v421M37 9v421M6 153h502M6 297h502"/>
          <g class="node"><rect x="91" y="23" width="82" height="19"/><path d="M240 21h65l6 11-6 12h-65l-6-12z"/><rect x="94" y="64" width="77" height="21" rx="2"/><path d="M251 64h54l6 11-6 10h-54l-6-10z"/><rect x="383" y="64" width="73" height="21"/><rect x="94" y="99" width="76" height="21"/><rect x="51" y="176" width="98" height="18"/><rect x="183" y="176" width="82" height="18"/><rect x="294" y="163" width="83" height="18"/><rect x="420" y="163" width="83" height="18"/><rect x="62" y="217" width="76" height="18"/><rect x="174" y="217" width="101" height="18"/><rect x="296" y="202" width="80" height="18"/><rect x="413" y="241" width="80" height="18"/><rect x="322" y="259" width="74" height="17"/><rect x="213" y="258" width="67" height="20"/><path d="M218 303h44l7 15-7 15h-44l-7-15z"/><path d="M214 357h52l6 11-6 10h-52l-5-10z"/><rect x="70" y="359" width="75" height="18"/><rect x="357" y="308" width="93" height="21" rx="2"/><rect x="357" y="343" width="104" height="21" rx="2"/><rect x="357" y="377" width="93" height="21" rx="2"/></g>
          <g class="edge"><path marker-end="url(#m)" d="M173 32h61"/><path marker-end="url(#m)" d="M268 44v10H132v10"/><path marker-end="url(#m)" d="M171 75h74"/><path marker-end="url(#m)" d="M311 75h72"/><path marker-end="url(#m)" d="M279 85v25H170"/><path marker-end="url(#m)" d="M132 99V85"/><path marker-end="url(#m)" d="M419 85v47H92v22h8v22"/><path marker-end="url(#m)" d="M224 132v44"/><path marker-end="url(#m)" d="M419 131h-83v32"/><path marker-end="url(#m)" d="M419 131h43v32"/><path marker-end="url(#m)" d="M388 132v113h-29v14"/><path marker-end="url(#m)" d="M100 194v23"/><path marker-end="url(#m)" d="M224 194v23"/><path marker-end="url(#m)" d="M336 181v21"/><path marker-end="url(#m)" d="M461 181v60"/><path marker-end="url(#m)" d="M322 268h-42"/><path marker-end="url(#m)" d="M145 368h64"/><path marker-end="url(#m)" d="M240 357v-24"/><path marker-end="url(#m)" d="M272 368h43v-50h42"/><path marker-end="url(#m)" d="M315 353h42"/><path marker-end="url(#m)" d="M315 430v-42h42"/><path d="M315 368v20M240 378v52"/><path marker-end="url(#m)" d="M108 430v-53"/></g>
          <g><text x="132" y="32">注册</text><text x="273" y="32">个人信息</text><text x="132" y="74">登录</text><text x="278" y="74">个人信息</text><text x="419" y="74">登陆成功</text><text x="132" y="110">登录失败</text><text x="100" y="185">动物日常信息管理</text><text x="224" y="185">动物管理</text><text x="336" y="172">动物健康管理</text><text x="462" y="172">饲养规范管理</text><text x="100" y="226">查看动物日常</text><text x="224" y="226">查看动物基本信息</text><text x="336" y="211">查看动物健康</text><text x="453" y="250">查看饲养规范</text><text x="359" y="267">饲养员管理</text><text x="247" y="267">查看饲养员</text><text x="240" y="318">动物信息</text><text x="240" y="368">用户信息</text><text x="108" y="368">登录</text><text x="404" y="318">动物管理</text><text x="409" y="353">动物日常信息管理</text><text x="404" y="388">动物健康管理</text></g>
          <g class="lane"><text transform="translate(22 82) rotate(-90)">普通用户</text><text transform="translate(22 225) rotate(-90)">页面交互</text><text transform="translate(22 369) rotate(-90)">工作人员</text></g>
        </svg>
      </div>
    </article>
  </main>

  <div class="vscroll">
    <svg viewBox="0 0 12 12"><path d="M2 0h8L6 5zM0 7h12v4H0z"/></svg><svg viewBox="0 0 12 12"><path d="M2 9h8L6 3z"/></svg>
    <div class="track"><div class="thumb"></div></div>
    <svg viewBox="0 0 12 12"><path d="M2 2h8L6 9z"/></svg><svg viewBox="0 0 12 12"><path d="M2 6h8L6 1zM2 11h8L6 6z"/></svg><svg viewBox="0 0 12 12"><path d="M2 1h8v10H2zM4 3v6h4V3z" fill-rule="evenodd"/></svg><svg viewBox="0 0 12 12"><path d="M2 1h8L6 6zM2 6h8l-4 5z"/></svg>
  </div>
  <div class="rail">
    <svg class="grip"><path d="M2 4h22" stroke="#8c8f92" stroke-width="3"/></svg><svg><use href="#pen"/></svg><svg><use href="#arrow"/></svg><svg><use href="#sliders"/></svg><svg><use href="#leaf"/></svg><svg><use href="#wand"/></svg><svg><use href="#help"/></svg><svg><use href="#shirt"/></svg><svg><use href="#dots"/></svg>
  </div>
</div>

<footer class="status">
  <span>页面: 11/34</span><i class="vsep"></i><span>字数: 10082</span><i class="vsep"></i><button>拼写检查: 打开<svg class="i12"><use href="#caret"/></svg></button>
  <button class="proof"><svg class="i24"><use href="#proof"/></svg>AI 校对<svg class="i12"><use href="#caret"/></svg></button><i class="vsep"></i>
  <button class="warn"><svg class="i20" viewBox="0 0 20 20"><path d="M10 2l9 16H1z" fill="#fbc45c" stroke="#fbc45c"/><path d="M10 7v6M10 15v2" stroke="#6b4a10" stroke-width="2"/></svg>缺失字体</button>
  <div class="views">
    <span class="v"><svg class="i26"><use href="#eye"/></svg></span><i class="vsep"></i>
    <span class="v on"><svg class="i26"><use href="#page"/></svg></span><span class="v"><svg class="i26"><use href="#list"/></svg></span><span class="v"><svg class="i26"><use href="#play"/></svg></span><span class="v"><svg class="i26"><use href="#globe"/></svg></span><span class="v"><svg class="i26"><use href="#quill"/></svg></span><i class="vsep"></i><span class="v"><svg class="i26"><use href="#focus"/></svg></span>
    <span class="pct">60%</span><svg class="i12"><use href="#caret"/></svg>
    <svg class="i20 zo"><use href="#minus"/></svg><input type="range" min="0" max="100" value="30" aria-label="缩放"><svg class="i20 zi"><use href="#plus"/></svg><svg class="i26"><use href="#full"/></svg>
  </div>
</footer>
<div class="desk"></div>

<div class="ime">
  <svg class="logo" viewBox="0 0 48 48"><path d="M2 9L38 1c3 0 4 1 5 4l4 31c0 3-1 4-4 5L15 47c-4 1-6 0-7-4L1 13c0-2 0-3 1-4z" fill="#f4511e" stroke="none"/><path d="M36 12c-9-3-22-3-22 4 0 8 21 3 21 11 0 8-14 10-24 7" stroke="#fff" stroke-width="7"/></svg>
  <b>中</b><b>°,</b>
  <svg viewBox="0 0 24 24"><circle cx="12" cy="12" r="11" fill="#0a6fd8" stroke="none"/><path d="M8 6v4M16 6v4" stroke="#fff" stroke-width="3"/><path d="M5 13h14c-1 9-13 9-14 0z" fill="#fff" stroke="none"/></svg>
  <svg viewBox="0 0 24 24"><rect x="8" y="0" width="8" height="14" rx="4" fill="#0a6fd8" stroke="none"/><path d="M4 10c0 10 16 10 16 0M12 18v2M9 23h6" stroke="#0a6fd8" stroke-width="2"/></svg>
  <svg viewBox="0 0 24 24"><rect x="2" y="3" width="20" height="18" rx="2" stroke="#0a6fd8" stroke-width="3"/><path d="M5 8h14M5 13h14M7 18h10M8 5v9M12 5v9M16 5v9" stroke="#0a6fd8" stroke-width="1.500"/></svg>
  <svg viewBox="0 0 24 24"><path d="M1 5l6-3c2 3 7 3 9 0l7 3-2 7h-3v11H6V12H2z" fill="#0a6fd8" stroke="none"/><circle cx="21" cy="1" r="6" fill="#ff5330" stroke="none"/></svg>
  <svg viewBox="0 0 24 24"><path d="M3 3h7v7H5a2 2 0 0 1-2-2zM3 13h7v9H5a2 2 0 0 1-2-2zM14 13h8v7a2 2 0 0 1-2 2h-6z" fill="#0a6fd8" stroke="#0a6fd8"/><rect x="14" y="3" width="7" height="7" rx="3" stroke="#0a6fd8" stroke-width="3"/></svg>
  <svg class="face" viewBox="0 0 32 32"><ellipse cx="15" cy="17" rx="13" ry="14" fill="#fff" stroke="#e5d6da"/><path d="M2 13c8-6 18-6 25-3-4 10-18 10-25 7z" fill="#f4641e" stroke="none"/><path d="M8 16l6-3M20 14l3-1M15 24c3 0 5-2 5-5" stroke="#222" stroke-width="2"/><path d="M28 10l1 5 4 2-4 2-1 5-2-5-3-2 3-2z" fill="#ffd83c" stroke="none"/></svg>
</div>
<div class="ball">--:--</div>
<div class="watermark">CSDN @计算机源码站</div>
</body>
</html>
```
FILE: styles.css
```css
* { box-sizing: border-box; }
body {
  margin: 0;
  height: 100vh;
  overflow: hidden;
  display: flex;
  flex-direction: column;
  position: relative;
  background: linear-gradient(100deg, #e0e4e8 0%, #dfe4e7 30%, #e1e4e9 50%, #dfe3eb 78%, #dfe4e7 90%, #e1e5e8 100%);
  font: 18px/24px "Open Sans", "Noto Sans CJK SC", sans-serif;
  color: #1a1a1a;
}
.sprite { position: absolute; width: 0; height: 0; }
svg { fill: none; stroke: #333; stroke-width: 1.5; flex: none; overflow: visible; }
.bl { stroke: #2456dc; }
.or { stroke: #c85a1c; }
button { border: 0; background: none; padding: 0; font: inherit; color: inherit; display: flex; align-items: center; white-space: nowrap; }
a { color: inherit; text-decoration: none; }
.i12 { width: 12px; height: 12px; }
.i16 { width: 16px; height: 16px; }
.i20 { width: 20px; height: 20px; }
.i22 { width: 22px; height: 22px; }
.i24 { width: 24px; height: 24px; }
.i26 { width: 26px; height: 26px; }
.i32 { width: 32px; height: 32px; }
.thin { stroke-width: 1.2; }
.dim { opacity: 0.5; }
.up { transform: rotate(180deg); }
.vsep { width: 1px; height: 24px; background: #c3c7ca; flex: none; }
.vsep.tall { height: 30px; }

.titlebar { display: flex; align-items: center; gap: 6px; height: 60px; padding: 0 16px 0 12px; flex: none; }
.tab { height: 46px; border-radius: 10px; background: #d4d9dc; padding: 0 18px; gap: 9px; }
.tab-home { width: 168px; }
.tab-tpl { width: 198px; }
.tab-doc { width: 360px; }
.tab.active { background: #fff; }
.tab.active .i20 { margin-left: auto; }
.tab.active .i24 { margin-left: 8px; }
.fade { width: 226px; overflow: hidden; white-space: nowrap; mask-image: linear-gradient(90deg, #000 90%, transparent); }
.app { width: 24px; height: 24px; border-radius: 3px; color: #fff; font-weight: 700; text-align: center; }
.app.green { background: #10a05a; }
.app.blue { background: #1c6cf2; }
.flat { padding: 0 6px; }
.winctl { margin-left: auto; display: flex; align-items: center; gap: 22px; }
.winctl .avatar { width: 32px; height: 32px; }
.winctl .i20 { margin: 0 16px 0 14px; }
.winctl .i24 + .i24 { margin-left: 14px; }

.menubar { display: flex; align-items: center; height: 50px; padding: 0 18px 4px 26px; flex: none; }
.file { gap: 7px; margin-right: 18px; }
.auto { display: flex; align-items: center; gap: 10px; margin: 0 23px 0 22px; }
.toggle { appearance: none; margin: 0; width: 41px; height: 24px; border-radius: 12px; background: #8b8d8f; padding: 3px; }
.toggle::before { content: ""; display: block; width: 18px; height: 18px; border-radius: 9px; background: #fff; }
.quick { display: flex; align-items: center; gap: 15px; margin-right: 22px; }
.pair { display: flex; align-items: center; gap: 8px; }
.quick .dim + .i16 { margin-left: 4px; }
.tabs { display: flex; gap: 50px; margin: 0 22px 0 32px; font-size: 20px; }
.tabs a { line-height: 38px; }
.tabs .on { color: #1a5fd0; font-weight: 700; box-shadow: 0 3px #1a5fd0; }
.wpsai { gap: 7px; margin: 0 32px 0 26px; }
.wpsai svg { width: 23px; height: 20px; }
.vsep.tall + svg { margin-left: 20px; }
.menubar .right { margin-left: auto; display: flex; align-items: center; gap: 17px; }
.share { width: 84px; height: 36px; border-radius: 6px; background: #1c67e3; color: #fff; padding-left: 12px; gap: 7px; }
.share svg { stroke: #fff; }

.ribbon { display: flex; height: 112px; margin: 0 18px 0 19px; background: #fff; border: 1px solid #c9cccf; border-radius: 12px; box-shadow: 0 1px 3px #0002; flex: none; }
.grp { position: relative; display: flex; padding-top: 15px; }
.grp + .grp::before { content: ""; position: absolute; left: 0; top: 6px; width: 1px; height: 98px; background: #dadcde; }
.launch { position: absolute; right: 4px; bottom: 3px; width: 12px; height: 12px; stroke: #777; }
.big { flex-direction: column; gap: 12px; padding-top: 4px; align-self: flex-start; }
.big span { display: flex; align-items: center; gap: 4px; }
.clip { width: 204px; padding-left: 23px; gap: 17px; }
.stackcol { display: flex; flex-direction: column; gap: 19px; padding-top: 6px; }
.font { width: 509px; padding-left: 13px; }
.para { width: 436px; padding-left: 9px; }
.rows { display: flex; flex-direction: column; gap: 7px; }
.row { display: flex; align-items: center; height: 36px; }
.row > span { display: flex; }
.row.gap { gap: 4px; }
.row.in { margin-left: -3px; }
.t { width: 42px; height: 36px; justify-content: center; font-size: 21px; }
.t.wide { width: 50px; }
.tc { width: 60px; height: 36px; padding-left: 11px; gap: 4px; font-size: 21px; }
.tc .i24 { margin-right: 2px; }
.tc u, .tc .g { width: 26px; text-align: center; }
.tc sup { font-size: 11px; line-height: 8px; }
.t b { font-weight: 600; }
.t em { font-family: "Liberation Serif", serif; }
.wen { width: 26px; font-size: 16px; line-height: 18px; text-align: center; }
.wen small { display: block; font-size: 12px; line-height: 14px; }
.shade { width: 25px; height: 25px; background: #d9d9d9; border: 1px solid #bbb; text-align: center; font-size: 18px; }
.pressed { background: #e4e4e4; border-radius: 6px; }
.vsep.mid { margin: 0 11px; height: 28px; }
.combo { display: flex; height: 36px; width: 289px; border: 1px solid #c4c6c8; border-radius: 6px; margin-right: 6px; }
.sel { display: grid; align-items: center; flex: none; }
.sel.name { width: 197px; border-right: 1px solid #c4c6c8; }
.sel.size { width: 90px; }
.sel select, .sel svg { grid-area: 1 / 1; }
.sel svg { justify-self: end; margin-right: 8px; }
.sel select { appearance: none; border: 0; background: none; font: inherit; color: #222; padding: 0 12px; width: 100%; }
.style { width: 709px; padding-left: 12px; }
.gallery { display: flex; width: 593px; height: 76px; border: 1px solid #c4c6c8; border-radius: 8px; padding: 3px; margin-right: 17px; }
.gallery button { width: 141px; justify-content: center; padding-top: 3px; font-family: "Liberation Serif", "Noto Sans CJK SC", serif; }
.gallery .cur { width: 138px; border: 6px solid #cfcfcf; border-radius: 6px; }
.gallery .h1 { font-weight: 700; font-size: 20px; }
.gallery .h3 { font-weight: 700; font-size: 25px; }
.spin { margin-left: auto; margin-right: 5px; display: flex; flex-direction: column; justify-content: space-around; }
.find { width: 230px; padding-left: 18px; gap: 21px; }
.lab svg:first-child { margin-right: 6px; }
.lab svg:last-child { margin-left: 6px; }
.lay { width: 251px; padding-left: 20px; gap: 18px; }
.last { padding-left: 18px; }

.notice { display: flex; align-items: center; height: 46px; padding: 0 8px; background: #ebf2ff; flex: none; }
.msg { flex: 1; display: flex; align-items: center; justify-content: center; padding-right: 82px; }
.info { width: 24px; height: 24px; border-radius: 12px; background: #2470f5; color: #fff; text-align: center; font-weight: 700; margin-right: 9px; }
.msg button { width: 108px; height: 27px; justify-content: center; background: #1c67e3; color: #fff; border-radius: 4px; margin-left: 41px; }

.work { flex: 1; min-height: 0; display: flex; }
.side { width: 484px; border-right: 2px solid #cfd1d4; display: flex; flex-direction: column; flex: none; }
.sidetabs { display: flex; align-items: center; gap: 27px; font-size: 21px; padding: 17px 24px 0 18px; }
.sidetabs a { line-height: 35px; }
.sidetabs .on { color: #1a5fd0; font-weight: 700; box-shadow: 0 3px #1a5fd0; }
.sidetabs svg { margin-left: auto; }
.sidebtns { display: flex; gap: 6px; padding: 30px 18px 0; }
.sidebtns button { width: 36px; height: 36px; justify-content: center; background: #fff; border: 1px solid #c9ccd0; border-radius: 6px; }
.w16 { width: 16px; height: 16px; }
.sidebtns .aibtn { width: 138px; margin-left: auto; gap: 5px; }
.aibtn svg { width: 24px; height: 18px; }
.tocwrap { flex: 1; min-height: 0; overflow: hidden; margin-top: 25px; display: flex; }
.toc { list-style: none; margin: -12px 0 0; padding: 0; width: 466px; flex: none; }
.toc li { display: flex; align-items: center; gap: 8px; height: 36px; margin: 0 1px 3px 66px; border-radius: 8px; padding-left: 41px; position: relative; }
.toc .l2 { padding-left: 17px; }
.toc .l1 { padding-left: 0; margin-left: 58px; }
.toc .sel { background: #cfcfd0; }
.toc .open::before { content: ""; position: absolute; left: -4px; border: 5px solid transparent; border-top: 7px solid #666; border-bottom: 0; }
.toc .l1.open::before { left: -20px; }
.sidebar-thumb { width: 10px; background: #c8cacc; border-radius: 5px; margin: 430px 0 0 3px; }

.canvas { flex: 1; min-width: 0; overflow: hidden; display: grid; grid-template-columns: 714px 714px; justify-content: center; align-content: start; gap: 18px 17px; }
.page { background: #fff; border: 1px solid #a9abad; padding: 0 87px; box-shadow: 0 1px 3px #0002; height: 700px; font: 14px/28px "Liberation Serif", "Noto Sans CJK SC", serif; color: #000; }
.page.top { height: 662px; border-top: 0; overflow: hidden; }
.body p, .body h1, .body h2 { margin: 0; }
.top .body { margin-top: -15px; height: 592px; }
.body p span { display: block; width: 532px; white-space: nowrap; text-align: justify; text-align-last: justify; }
.body p .ind { padding-left: 28px; }
.body p .end { text-align-last: left; }
.body u { text-underline-offset: 3px; }
.body h1 { font: 700 17px/42px "Liberation Mono", "Noto Sans CJK SC", monospace; margin-bottom: 4px; }
.body h2 { font: 500 14px/28px "Liberation Mono", "Noto Sans CJK SC", monospace; }
.body .cap { font: 500 14px/28px "Liberation Mono", "Noto Sans CJK SC", monospace; text-align: center; margin-top: 14px; }
.page footer { color: #777; font-size: 12px; line-height: 14px; }
.marks { display: flex; justify-content: space-between; margin: 0 -21px; }
.marks i { width: 22px; height: 20px; border-top: 1px solid #bbb; border-right: 1px solid #bbb; }
.marks i + i { border-right: 0; border-left: 1px solid #bbb; }
.no.r { text-align: right; }
.page header { position: relative; height: 74px; border-bottom: 1px solid #777; text-align: right; color: #777; font-size: 11px; line-height: 14px; padding-top: 59px; margin-bottom: 5px; }
.page header::before, .page header::after { content: ""; position: absolute; top: 62px; width: 22px; height: 21px; border-bottom: 1px solid #bbb; }
.page header::before { left: -22px; border-right: 1px solid #bbb; }
.page header::after { right: -22px; border-left: 1px solid #bbb; }
.body.flow { padding-top: 27px; }

.dia { display: block; stroke: #3a3f45; stroke-width: 1; font-family: "Noto Sans CJK SC", sans-serif; }
.dia text { stroke: none; fill: #333; text-anchor: middle; dominant-baseline: central; font-size: 7px; }
.tree { margin-top: 13px; }
.dia .vert text { writing-mode: vertical-rl; font-size: 8px; }
.use { margin-top: 17px; }
.dia .node { fill: #fff; }
.dia .tag text { stroke: #fff; stroke-width: 3; paint-order: stroke; }
.flowsvg { margin-top: 5px; }
.flowsvg text { font-size: 10px; }
.flowsvg .lane text { font-size: 12px; }

.vscroll { width: 24px; display: flex; flex-direction: column; align-items: center; gap: 12px; padding: 12px 0; border-right: 2px solid #c9cccf; flex: none; }
.vscroll svg { width: 12px; height: 12px; fill: #6c6e70; stroke: none; }
.track { flex: 1; }
.thumb { width: 12px; height: 73px; margin-top: 333px; border-radius: 6px; background: #c5c9cc; }
.rail { width: 84px; display: flex; flex-direction: column; align-items: center; gap: 34px; padding-top: 31px; flex: none; }
.rail svg { width: 26px; height: 26px; }
.rail .grip { height: 8px; }

.status { display: flex; align-items: center; height: 37px; padding: 0 22px 0 25px; border-top: 1px solid #c9cccf; flex: none; white-space: nowrap; }
.status > .vsep { margin: 0 19px; }
.status button { gap: 8px; }
.proof { margin-left: 34px; }
.status .proof + .vsep { margin: 0 22px; }
.views { margin-left: auto; display: flex; align-items: center; }
.views .vsep { margin: 0 6px; }
.v { width: 36px; height: 36px; margin: 0 6px; display: flex; align-items: center; justify-content: center; border-radius: 6px; }
.v.on { background: #cbcccf; }
.pct { margin: 0 24px 0 22px; color: #3b4660; }
.zo { margin: 0 20px 0 25px; }
.zi { margin: 0 25px 0 20px; }
input[type="range"] { appearance: none; width: 158px; height: 18px; margin: 0; background: linear-gradient(90deg, #1c67e3 30%, #b0b3b6 30%) center / 100% 2px no-repeat; }
input[type="range"]::-webkit-slider-thumb { appearance: none; width: 18px; height: 18px; border-radius: 9px; border: 4px solid #fff; background: #777; }
.desk { height: 5px; background: #d3dfe9; border-top: 2px solid #a9b3bb; flex: none; }

.ime { position: absolute; right: 0; top: 32px; width: 314px; height: 39px; background: #fff; border: 1px solid #b9cbe2; display: flex; align-items: center; gap: 12px; color: #0a6fd8; font-size: 24px; }
.ime svg { width: 24px; height: 24px; }
.ime b { width: 25px; text-align: center; }
.ime .logo { width: 48px; height: 48px; margin: -8px -3px 0 -26px; }
.ime .face { width: 32px; height: 32px; margin-left: -4px; }
.ball { position: absolute; right: 58px; top: 84px; width: 74px; height: 74px; border: 4px solid #f2f8ff; border-radius: 37px; background: linear-gradient(45deg, #6ec8ff, #4aa5ff 45%, #2f80f8); color: #fff; text-align: center; line-height: 66px; font-size: 28px; box-shadow: 0 3px 8px #0003; }
.watermark { position: absolute; right: 7px; bottom: 10px; font: 50px/70px "Noto Sans CJK SC", sans-serif; color: #ffffff99; text-shadow: 1px 1px 2px #0007; white-space: nowrap; }
```
